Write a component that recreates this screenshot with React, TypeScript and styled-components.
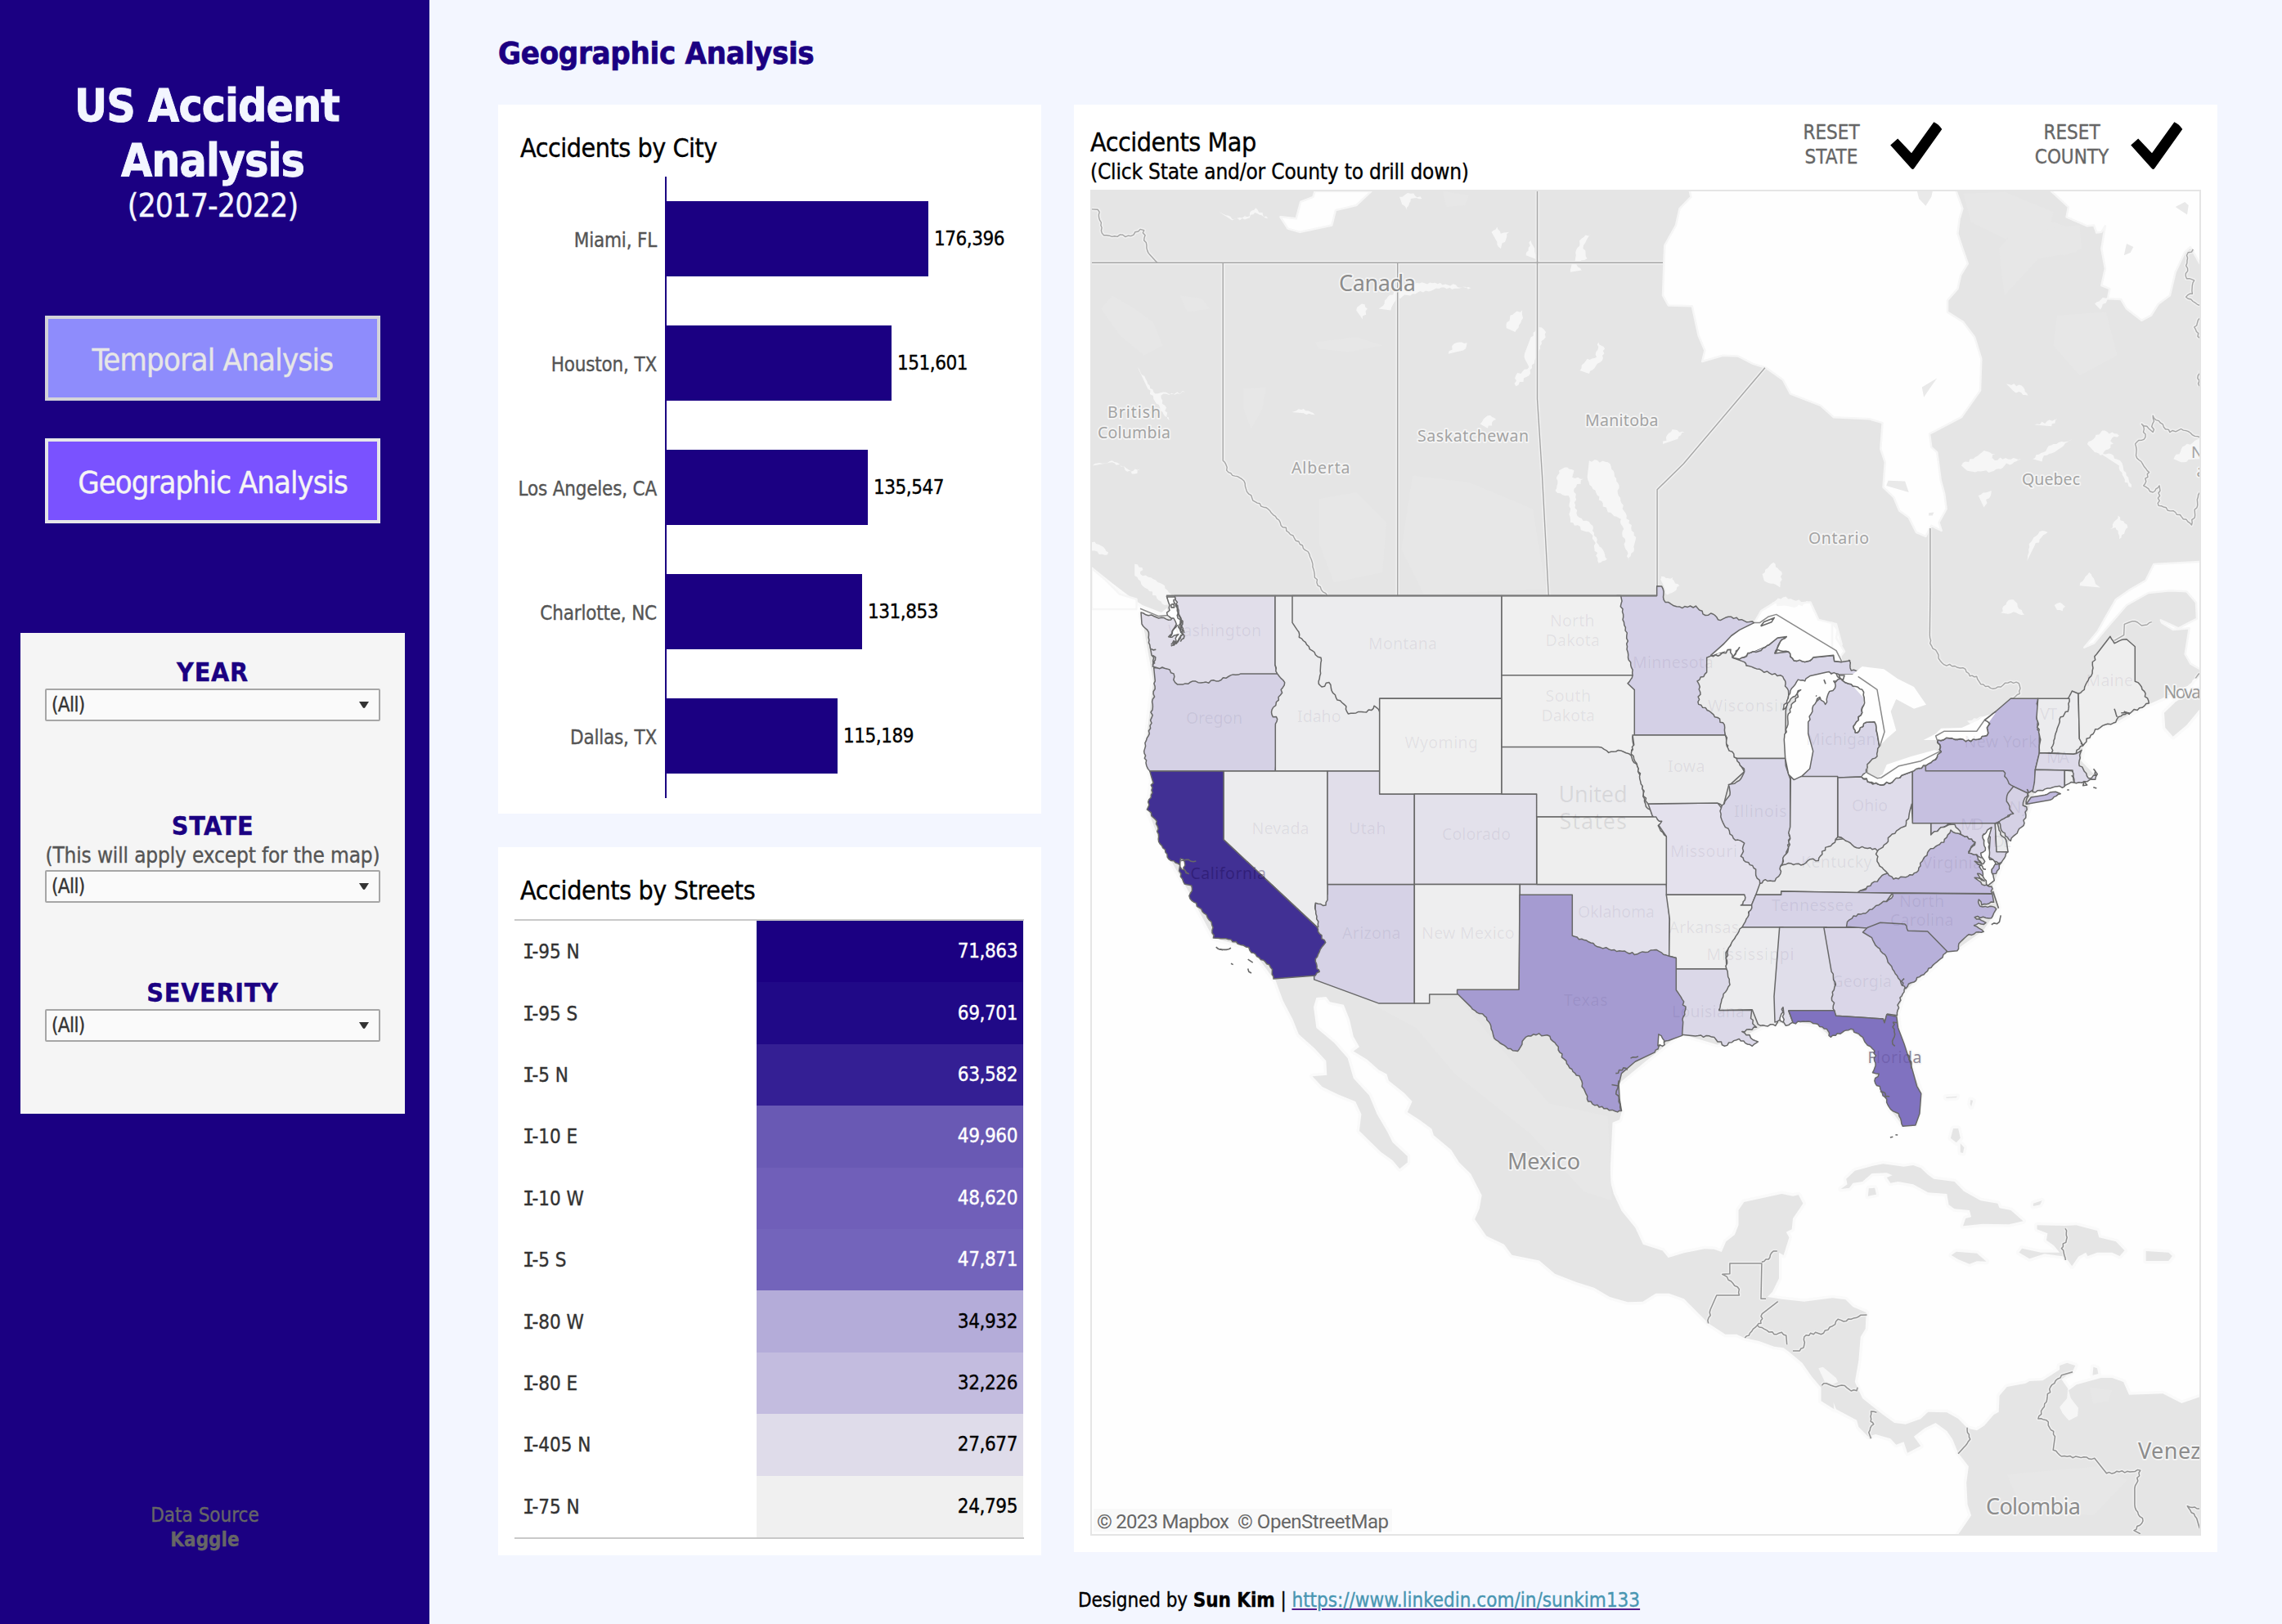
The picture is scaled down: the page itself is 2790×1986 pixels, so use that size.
import React from "react";
import styled, { createGlobalStyle } from "styled-components";

const NAVY = "#1b0082";

const GlobalStyle = createGlobalStyle`
  * { box-sizing: border-box; }
  body { margin: 0; background: #f3f6ff; }
`;

/* ---------- layout ---------- */

const Page = styled.div`
  display: flex;
  width: 2790px;
  height: 1986px;
  overflow: hidden;
  background: #f3f6ff;
  color: #000;
  font-family: "DejaVu Sans Condensed", "DejaVu Sans", Verdana, sans-serif;
  -webkit-text-stroke: 0.35px;
`;

const Sidebar = styled.aside`
  display: flex;
  flex-direction: column;
  width: 525px;
  height: 100%;
  padding: 96px 30px 0 25px;
  background: ${NAVY};
`;

const Brand = styled.header`
  height: 290px;
  color: #f3f6ff;
  text-align: center;
`;

const BrandLine = styled.div<{ $shift?: number }>`
  font-size: 55px;
  font-weight: 700;
  line-height: 67px;
  letter-spacing: -1px;
  white-space: nowrap;
  padding-right: ${(p) => p.$shift ?? 0}px;
  -webkit-text-stroke: 0.8px;
`;

const BrandYears = styled.div`
  font-size: 39px;
  line-height: 44px;
  letter-spacing: -0.9px;
`;

const Nav = styled.nav`
  display: flex;
  flex-direction: column;
  gap: 46px;
  padding: 0 30px;
`;

const NavButton = styled.button<{ $active?: boolean }>`
  height: 104px;
  padding: 3px 0 0;
  border: 4px solid ${(p) => (p.$active ? "#e6e6e9" : "#d3d3d9")};
  background: ${(p) => (p.$active ? "#7a52ff" : "#8e8cfc")};
  color: ${(p) => (p.$active ? "#f5f5f5" : "#e6e6e6")};
  font-family: inherit;
  font-size: 38px;
  letter-spacing: ${(p) => (p.$active ? -1 : -0.75)}px;
  white-space: nowrap;
  -webkit-text-stroke: 0.4px;
`;

const Filters = styled.section`
  height: 588px;
  margin-top: 134px;
  padding: 28px 30px 0;
  background: #f5f5f5;
`;

const Filter = styled.div<{ $gap?: number }>`
  display: flex;
  flex-direction: column;
  margin-bottom: ${(p) => p.$gap ?? 0}px;
`;

const FilterLabel = styled.div`
  font-size: 32px;
  font-weight: 700;
  line-height: 40px;
  letter-spacing: 0.7px;
  text-align: center;
  color: ${NAVY};
`;

const FilterNote = styled.div`
  margin-bottom: 2px;
  font-size: 26px;
  line-height: 32px;
  letter-spacing: -0.16px;
  text-align: center;
  white-space: nowrap;
  color: #555;
`;

const Select = styled.div`
  display: flex;
  align-items: center;
  justify-content: space-between;
  height: 40px;
  padding: 0 12px 0 6px;
  border: 2px solid #a6a6a6;
  border-radius: 2px;
  background: #fafafa;
  color: #333;
  font-size: 24px;
  letter-spacing: -0.6px;
`;

const Source = styled.footer`
  margin: auto 0 88px;
  padding-right: 19px;
  text-align: center;
  color: #666;
  font-size: 24px;
  line-height: 30px;
`;

const Main = styled.main`
  display: flex;
  flex-direction: column;
  width: 2265px;
  padding: 41px 0 0 84px;
`;

const Heading = styled.h1`
  margin: 0 0 39px;
  font-size: 38px;
  line-height: 48px;
  letter-spacing: -0.3px;
  color: ${NAVY};
  -webkit-text-stroke: 0.7px;
`;

const Board = styled.div`
  display: grid;
  grid-template-columns: 664px 1398px;
  column-gap: 40px;
  align-items: start;
`;

const Stack = styled.div`
  display: flex;
  flex-direction: column;
  gap: 41px;
`;

const Card = styled.section<{ $height: number }>`
  height: ${(p) => p.$height}px;
  background: #fff;
`;

const CardTitle = styled.h2<{ $spacing: number }>`
  margin: 0;
  padding: 33px 0 0 27px;
  font-size: 32px;
  font-weight: 400;
  line-height: 40px;
  letter-spacing: ${(p) => p.$spacing}px;
`;

/* ---------- city bars ---------- */

const CityChart = styled.div`
  display: grid;
  grid-template-rows: repeat(5, 152px);
  margin-top: 15px;
`;

const CityRow = styled.div`
  display: grid;
  grid-template-columns: 204px 1fr;
`;

const CityLabel = styled.div`
  padding: 4px 10px 0 0;
  font-size: 24px;
  line-height: 148px;
  letter-spacing: -0.2px;
  text-align: right;
  color: #555;
`;

const CityTrack = styled.div`
  display: flex;
  align-items: center;
  border-left: 2px solid ${NAVY};
`;

const Bar = styled.div`
  height: 92px;
  background: ${NAVY};
`;

const BarValue = styled.span`
  margin-left: 7px;
  font-size: 24px;
  letter-spacing: -0.45px;
`;

/* ---------- street table ---------- */

const StreetTable = styled.div`
  display: grid;
  grid-template-rows: repeat(10, 1fr);
  height: 758px;
  margin: 15px 21px 0 20px;
  border-top: 2px solid #c9c9c9;
  border-bottom: 2px solid #c9c9c9;
`;

const StreetRow = styled.div`
  display: grid;
  grid-template-columns: 296px 326px;
  font-size: 24px;
`;

const StreetName = styled.div`
  display: flex;
  align-items: center;
  padding: 1px 0 0 12px;
  white-space: pre;
  color: #333;
`;

/* Interstate "I" with slab serifs, so that it is not read as a lowercase L. */
const SlabI = styled.span`
  margin: 0 -3px 0 -2px;
  font-family: "DejaVu Sans Mono", monospace;
`;

const StreetValue = styled.div<{ $fill: string; $dark: boolean }>`
  display: flex;
  align-items: center;
  justify-content: flex-end;
  padding: 0 7px 1px 0;
  letter-spacing: -0.4px;
  background: ${(p) => p.$fill};
  color: ${(p) => (p.$dark ? "#fff" : "#000")};
`;

/* ---------- map card ---------- */

const MapHeader = styled.div`
  display: flex;
  height: 104px;
  padding: 0 36px 0 20px;
`;

const MapTitles = styled.div`
  flex: 1;
  padding-top: 28px;
  line-height: 36px;
  white-space: nowrap;
`;

const MapTitle = styled.div`
  font-size: 32px;
  letter-spacing: -0.5px;
`;

const MapHint = styled.div`
  font-size: 26px;
  letter-spacing: -0.18px;
`;

const Resets = styled.div`
  display: flex;
  gap: 102px;
`;

const Reset = styled.div`
  display: flex;
  gap: 16px;
`;

const ResetText = styled.div`
  width: 100px;
  padding-top: 19px;
  font-size: 24px;
  line-height: 30px;
  text-align: center;
  color: #666;
`;

const CheckIcon = styled.svg`
  width: 76px;
  height: 70px;
  margin-top: 15px;
  filter: blur(0.7px);
`;

const MapFrame = styled.div`
  width: 1358px;
  height: 1646px;
  margin-left: 20px;
  border: 2px solid #e5e5e5;
  background: #fefefe;
`;

const MapCanvas = styled.svg`
  display: block;
  width: 1354px;
  height: 1642px;
  overflow: hidden;
`;

const Credit = styled.footer`
  margin-top: 40px;
  padding-left: 709px;
  font-size: 24px;
  line-height: 30px;
  letter-spacing: -0.08px;
`;

const ProfileLink = styled.a`
  color: #4996b2;
  letter-spacing: 0;
  text-decoration: underline;
  text-decoration-color: #551a8b;
  text-decoration-thickness: 2px;
  text-underline-offset: 2px;
`;

/* ---------- data ---------- */

const cities: [string, number][] = [
  ["Miami, FL", 176396],
  ["Houston, TX", 151601],
  ["Los Angeles, CA", 135547],
  ["Charlotte, NC", 131853],
  ["Dallas, TX", 115189],
];

const streets: [string, number, string][] = [
  ["I-95 N", 71863, "#1b0082"],
  ["I-95 S", 69701, "#200987"],
  ["I-5 N", 63582, "#341f94"],
  ["I-10 E", 49960, "#6959b4"],
  ["I-10 W", 48620, "#705fb9"],
  ["I-5 S", 47871, "#7364bb"],
  ["I-80 W", 34932, "#b4acd9"],
  ["I-80 E", 32226, "#c3bcdf"],
  ["I-405 N", 27677, "#dfdcea"],
  ["I-75 N", 24795, "#f0f0f0"],
];

const format = (n: number) => n.toLocaleString("en-US");

/* ---------- map geometry ----------
   Outlines are kept on regional survey sheets, each with its own origin and scale.
   An outline is a string of points with sheet names between them; a "~" before
   a point makes the segment that leads to it irregular (rivers, coasts). */

type Sheet = [ox: number, oy: number, sx: number, sy: number];

const sheets: Record<string, Sheet> = {
  G: [0, 0, 1, 1],
  T: [0, 0, 0.56202, 0.56202],
  W: [1320, 690, 3, 2.8],
  C: [1790, 690, 3, 2.8],
  E: [2240, 690, 3, 3],
  S: [2180, 1040, 2.9037, 3],
  P: [1300, 100, 2.1778, 2.45],
  Q: [2010, 100, 2.1778, 2.45],
  M: [1320, 1180, 2.0907, 1.9454],
  K: [1990, 1380, 2.1778, 3],
};

const noise = (x: number, y: number) => {
  const v = Math.sin(x * 12.9898 + y * 78.233) * 43758.5453;
  return (v - Math.floor(v)) * 2 - 1;
};

function wiggle(x0: number, y0: number, x1: number, y1: number, amp: number): string {
  const dx = x1 - x0;
  const dy = y1 - y0;
  const len = Math.hypot(dx, dy) || 1;
  const steps = Math.max(1, Math.round(len / 3.2));
  let d = "";
  for (let i = 1; i < steps; i++) {
    const t = i / steps;
    const k = noise(Math.round(x0 + i * 7), Math.round(y1 + i * 3)) * amp;
    d += `L${(x0 + dx * t - (dy / len) * k).toFixed(1)} ${(y0 + dy * t + (dx / len) * k).toFixed(1)}`;
  }
  return `${d}L${x1.toFixed(1)} ${y1.toFixed(1)}`;
}

function trace(spec: string, close = false, amp = 1.5): string {
  let sheet = sheets.G;
  let px = 0;
  let py = 0;
  let d = "";
  for (const token of spec.trim().split(/\s+/)) {
    if (sheets[token]) {
      sheet = sheets[token];
      continue;
    }
    const rough = token[0] === "~";
    const [a, b] = token.replace("~", "").split(",").map(Number);
    const x = sheet[0] + a / sheet[2];
    const y = sheet[1] + b / sheet[3];
    if (!d) d = `M${x.toFixed(1)} ${y.toFixed(1)}`;
    else d += rough ? wiggle(px, py, x, y, amp) : `L${x.toFixed(1)} ${y.toFixed(1)}`;
    px = x;
    py = y;
  }
  return close ? `${d}Z` : d;
}

const mainland = `
  G 1325,224 2699,224
  E 1358,390 ~1310,440 ~1215,490 1165,512 1100,545 1050,575 960,605 920,670 912,720 960,770 900,795 750,820 730,870 710,930 650,1010 620,1100 585,1190
  S 745,130 765,210 710,295 620,360 575,375 540,420 460,490 430,520 405,600 415,680 455,790 490,890 470,1005 425,1010 380,950 330,840 325,740 270,680 230,655 170,685 120,640 40,630 5,640
  T 1224,703 1210,706 1195,714 1180,718 1160,712 1155,710 1130,730 1112,745 1112,762
  M 1385,350 1380,368 1362,375 1355,510 1365,545 1385,585 1420,625 1440,665 1490,680 1505,697
  K 107,475 150,457 205,442 230,443 250,453 262,415 285,390 295,355 295,300 310,270 410,240 440,248 455,244 467,275 440,330 437,370 422,380 430,400 415,465 403,455 403,550 385,600 372,618
    410,626 470,635 545,622 580,628 600,655 635,675 633,735 620,765 615,850 605,930 625,990 680,1050 710,1080 740,1085 780,1066 800,1040 850,1042 880,1065 905,1100 930,1108 950,1090 975,1050 988,1040 990,980 1010,948 1060,935 1070,927 1105,925 1150,885 1150,870 1170,860 1192,870 1185,890
    1155,920 1175,960 1195,940 1260,915 1290,915 1320,930 1335,977 1425,973 1475,1008 1533,980 1533,1500
    880,1490 915,1420 905,1380 902,1300 908,1240 880,1190 865,1140 850,1110 820,1080 790,1100 762,1130 780,1165 745,1190 735,1150 715,1160 700,1138 660,1122 640,1130 615,1095 610,1070 555,1030 548,1005 550,1030 515,1000 515,950 490,910 465,860 430,820
    415,805 390,800 350,780 310,768 290,755 260,755 215,715 150,625 110,605 75,605 40,635 0,637
  M 1375,795 1355,790 1315,768 1270,755 1215,735 1175,703 1105,690 1085,665 1040,645 1010,605 1022,580 1028,548 1000,497 970,470 950,440 905,405 900,390 868,368 838,350 850,325 830,305 790,275 785,260 765,250 735,225 700,205 715,195 700,170 690,130 675,95 640,88 630,76 605,78 598,100 605,150 650,185 685,222 700,270 740,310 760,355 785,395 800,422 838,455 838,470 818,485 800,465 770,445 715,395 720,355 705,325 660,308 620,290 595,265 632,262 630,228 600,198 560,165 545,130 520,85 500,35
  W 711,1420 645,1335 620,1312 490,1280 405,1130 290,940 250,840 265,740 255,700 240,640 270,400 230,190 225,170 330,182 320,150 300,165 230,140 190,115 120,65 40,5`;

const waters = [
  `Q 120,318 125,345 95,380 85,430 55,490 50,640 65,670 128,672 145,760 162,805 155,838 210,820 250,822 290,845 325,857 370,893 390,935 470,970 505,1005 600,1010 635,1022 630,1100 642,1140 637,1215 665,1245 680,1285 705,1305 725,1350 750,1362 765,1330 792,1345 785,1320 805,1280 800,1235 790,1195 780,1110 765,1095 760,1055 845,1005 895,925 898,830 880,765 850,720 808,690 808,655 835,620 843,580 862,545 845,490 835,455 840,410 848,380 828,318`,
  `Q 1075,318 1130,375 1125,405 1180,432 1198,430 1205,452 1218,450 1228,432 1218,500 1228,560 1218,610 1240,620 1235,650 1270,652 1285,680 1325,715 1350,700 1370,665 1400,640 1415,570 1440,510 1455,495 1480,545 1490,545 1490,318`,
  `E 1358,-10 1180,0 1150,60 1090,95 1040,130 1000,200 975,245 925,305 960,290 1010,230 1080,150 1160,105 1240,97 1300,100 1335,140 1338,200 1270,235 1205,205 1210,215 1250,240 1310,235 1295,330 1315,365 1358,390`,
  `C 1065,200 1090,160 1150,125 1150,140 1270,130 1300,190 1365,205 1385,275 1375,290 1385,335 1358,332 1355,312 1290,318 1250,335 1210,330 1190,300 1140,305 1183,248 1120,275 1050,303 1010,325 905,312 950,275 1010,225`,
  `E 0,215 20,240 15,270 45,320 20,350 0,310`,
];

const palerWaters = [
  `P 76,1380 100,1390 120,1410 110,1418 76,1405`,
  `P 190,1445 210,1455 205,1475 240,1490 270,1510 305,1568 270,1568 225,1520 190,1480`,
  `P 1400,1135 1450,1140 1480,1210 1478,1240 1500,1300 1525,1365 1520,1400 1505,1435 1497,1400 1485,1310 1450,1290 1410,1220 1395,1185`,
  `P 1335,1155 1360,1165 1355,1185 1385,1190 1360,1220 1368,1300 1410,1330 1420,1380 1448,1430 1425,1442 1410,1360 1350,1320 1345,1240 1310,1225 1320,1165`,
  `P 1245,765 1265,735 1285,750 1270,800 1255,835 1240,880 1205,912 1205,880 1240,855 1228,815`,
  `P 840,680 880,630 920,605 990,602 1085,618 1000,620 930,635 890,648 872,685`,
  `P 1180,738 1190,700 1222,685 1220,715 1203,750`,
  `P 1025,815 1040,785 1075,782 1065,805`,
  `P 780,685 795,665 810,680 797,712`,
  `P 1140,450 1155,435 1165,455 1187,450 1165,500 1155,480`,
  `P 1232,520 1245,475 1255,500 1268,535`,
  `P 1350,570 1365,520 1380,470 1404,455 1385,490 1395,530 1365,540 1380,565`,
  `P 1375,865 1395,830 1420,825 1425,780 1442,800 1435,835 1400,875`,
  `P 1110,1025 1130,1000 1152,1012 1130,1038`,
  `P 608,990 640,980 670,998 640,993`,
  `P 415,390 450,412 490,405 512,378 545,410 510,392 490,410 450,415`,
  `P 895,345 925,335 955,350 925,350 915,385 900,360`,
  `P 198,855 225,905 245,935 325,930 260,940 282,1015 240,950 225,920`,
  `P 78,1150 130,1135 180,1168 205,1160 190,1175 130,1140`,
  `Q 50,1085 75,1042 108,1050 90,1070`,
  `Q 45,1482 75,1490 95,1510 60,1535`,
  `Q 315,1475 345,1440 368,1475 362,1515 320,1495`,
  `Q 340,1560 370,1545 440,1560 400,1575`,
  `Q 845,1150 905,1105 935,1115 920,1130 1005,1130 960,1150 925,1168 860,1165`,
  `Q 1180,1085 1220,1045 1265,1060 1235,1075 1250,1085 1215,1120 1200,1110`,
  `Q 1040,1028 1100,1010 1085,1032`,
  `Q 965,905 1005,910 1022,940 985,928`,
  `Q 1035,1130 1090,1085 1140,1070 1105,1100 1065,1120 1060,1138`,
  `Q 1020,1435 1025,1385 1060,1345 1075,1350 1040,1390`,
  `Q 890,1240 925,1225 905,1275`,
  `Q 1160,1510 1185,1470 1200,1495 1215,1515`,
  `Q 1410,1130 1440,1090 1480,1070 1478,1130 1430,1140`,
  `Q 1210,1110 1250,1120 1275,1150 1298,1215 1280,1200 1265,1150`,
  `Q 1200,665 1240,640 1215,682`,
  `Q 1242,1340 1262,1300 1288,1335 1265,1370 1262,1345 1255,1335`,
  `E 815,150 835,140 855,155 845,172 825,168`,
  `E 618,178 640,140 665,130 680,155 705,185 665,175 645,182`,
  `E 495,575 520,565 552,558 530,580 515,595`,
  `C 720,50 765,45 755,65 790,75 745,105 735,80`,
];

const whiteLakes = [
  `P 76,1458 110,1490 150,1535 195,1550 195,1580 76,1580`,
  `P 578,405 620,410 632,360 665,345 670,328 820,328 780,370 725,385 715,430 630,450 598,440`,
];

const farIslands = [
  `E 1218,545 1260,505 1300,480 1358,455 1358,520 1300,590 1250,632 1222,600`,
  `K 568,222 585,205 582,185 605,155 650,138 680,130 720,137 735,140 760,135 780,145 800,170 815,185 870,195 895,230 940,265 985,275 990,292 1020,300 1053,340 1015,352 945,350 893,358 900,330 915,325 910,300 870,295 855,280 850,240 800,235 760,205 720,195 700,200 690,180 705,172 690,163 650,165 625,195 600,200 590,218`,
  `K 1090,355 1165,357 1195,355 1250,375 1255,400 1300,415 1323,448 1310,468 1290,455 1250,455 1225,468 1220,455 1200,470 1183,505 1165,470 1110,460 1070,478 1042,455 1050,440 1100,455 1150,455 1135,430 1115,410 1118,385 1090,370`,
  `K 862,465 875,452 930,458 955,488 930,487 910,497 880,480`,
  `K 1380,450 1440,455 1450,468 1440,486 1380,486`,
  `K 642,220 658,218 662,242 640,248`,
  `K 867,0 880,0 886,35 875,52 860,35`,
  `K 886,55 896,70 893,90 886,88`,
  `K 1080,275 1103,265 1098,280 1080,285`,
  `S 578,905 618,902 615,907 580,909`,
  `S 666,915 674,918 668,940 664,930`,
  `K 1240,875 1250,880 1253,900 1238,905`,
];

const bayIslands = [
  `Q 650,1195 695,1197 705,1230 645,1210`,
  `Q 740,915 780,888 760,920 745,945`,
  `Q 725,318 770,318 765,345 750,372 732,350`,
  `Q 1285,485 1303,495 1295,512 1278,520`,
  `Q 1415,375 1440,360 1450,370 1446,398`,
  `Q 758,1292 772,1290 768,1300 758,1300`,
];

const inlandWaters = [
  `K 508,880 520,875 555,915 560,930 545,940 525,930`,
  `K 1172,950 1180,990 1200,1025 1198,1055 1175,1072 1158,1045 1150,1022 1170,990`,
];

const relief = [
  `P 130,640 190,680 240,720 265,790 215,820 150,760 100,680`,
  `P 310,640 370,650 390,680 330,690`,
  `P 480,920 540,915 530,980 500,1040 480,980`,
  `P 680,1250 780,1230 860,1320 850,1470 720,1500 680,1380`,
  `P 930,1180 1080,1200 1250,1280 1285,1520 960,1535 900,1400`,
  `P 670,780 780,765 850,790 760,810 680,800`,
  `P 1010,328 1080,340 1070,370 1020,375`,
  `Q 945,500 1000,430 1090,420 1160,450 1150,510 1050,530 960,640`,
  `Q 1080,440 1160,430 1165,500 1120,520 1080,510`,
  `Q 1100,700 1230,690 1260,820 1160,880 1090,790`,
  `Q 850,335 960,330 1090,390 1080,440 960,470 870,420`,
  `M 740,90 970,80 1050,170 1200,330 1350,360 1360,560 1290,540 1150,400 960,260 860,150`,
  `K 1010,1270 1250,1240 1330,1290 1240,1420 1050,1400`,
  `K 1230,950 1290,960 1280,1000 1240,1010`,
];

const provinceLines = [
  `P 76,542 1300,542 Q 50,542`,
  `P 425,542 425,1135 ~440,1170 ~475,1190 ~505,1255 ~545,1280 ~600,1350 ~655,1415 ~675,1500 ~703,1540`,
  `P 890,542 890,1540`,
  `P 1262,328 1262,950 1275,1180 1292,1540`,
  `P 76,382 92,383 ~100,430 ~108,460 ~180,462 ~205,442 ~215,445 ~215,475 ~232,520 250,542`,
  `Q 322,857 105,1145 35,1222 35,1515`,
  `Q 762,1338 762,1500 E 360,100 358,260 ~365,300 ~410,368 ~480,380 ~505,410 ~530,412 ~545,440 ~600,455 ~645,435 ~685,437 ~688,475 ~655,493`,
  `E 1035,280 1070,260 1072,220 1090,213 ~1120,213 ~1135,225 ~1172,212`,
  `Q 1462,502 ~1445,520 ~1445,590 ~1465,595 ~1460,635 ~1443,645 ~1480,670`,
  `Q 1480,708 ~1465,735 ~1480,768`,
  `Q 1480,1065 ~1430,1040 ~1400,1050 ~1355,1000 ~1355,1050 ~1325,1025 ~1335,1065 ~1308,1085 ~1310,1120 ~1345,1170 ~1330,1210 ~1355,1230 ~1372,1210 ~1370,1270 ~1415,1290 ~1458,1328 ~1480,1230`,
  `Q 1480,865 ~1475,880 ~1479,912`,
  `E 1333,418 1345,402 1350,402`,
];

const countryLines = [
  `K 215,715 ~220,665 237,612 297,612 ~297,590 ~275,560 ~252,535 272,533 272,495 357,495 355,625 368,625`,
  `K 357,490 ~375,480 ~388,450 398,450`,
  `K 400,635 358,680 ~355,715 ~345,722 ~330,745 ~312,768`,
  `K 345,722 ~390,755 ~410,748 ~422,760 424,793`,
  `K 440,816 458,816 ~470,795 ~470,765 ~500,748 ~515,755 ~545,725 ~560,700 ~575,708 ~620,685 637,684`,
  `K 517,943 ~522,935 ~555,948 ~570,942 ~595,963 ~610,962 612,950`,
  `K 663,1042 ~648,1038 ~647,1075 ~655,1085 ~642,1115 648,1138`,
  `K 904,1097 ~912,1140 ~895,1170 880,1193`,
  `K 1185,893 1155,905 ~1130,940 ~1110,1010 ~1093,1065 ~1115,1070 ~1138,1130 1133,1180 ~1155,1203 ~1200,1205 ~1243,1210 1275,1265 ~1330,1258 ~1365,1255 ~1350,1320 1350,1380 ~1372,1440 ~1348,1475 1365,1487`,
  `K 1523,1395 ~1490,1385 ~1515,1430 1523,1468`,
  `K 1165,367 ~1170,400 ~1155,440 ~1166,483`,
];

/* Painted in order: a later outline hides the rough overlap of the earlier ones. */
const states: [string, string, string][] = [
  ["OR", "#d5d1e5", `W 272,355 591,350 725,370 760,400 730,560 718,708 257,708 ~243,680 ~236,640 ~247,595 ~256,580 ~268,480 ~277,400`],
  ["WA", "#e1deea", `W 348,108 717,108 717,345 725,375 591,375 ~545,385 ~500,400 ~455,405 ~415,400 ~378,412 ~350,405 ~345,375 ~320,358 ~285,355 268,350 ~272,320 ~262,300 ~255,260 ~248,225 ~228,205 225,165 ~290,185 ~335,190 ~350,170 ~355,140`],
  ["ID", "#ececee", `W 717,108 900,108 1100,440 1100,708 718,708 718,555 ~725,530 ~705,515 ~710,490 ~730,465 ~752,405 ~725,375 ~717,345`],
  ["MT", "#ececee", `W 780,108 C 138,108 138,460 W 1100,460 1100,505 ~1080,485 ~1070,500 ~985,512 ~970,480 ~945,465 ~915,405 ~888,420 ~877,410 ~885,320 ~865,310 ~805,250 ~798,225 780,200`],
  ["AZ", "#d6d2e6", `W 909,1096 1228,1096 1228,1504 1098,1504 860,1422 860,1250 865,1160 909,1130`],
  ["NV", "#ececee", `W 528,708 909,708 909,1150 ~903,1168 ~865,1160 ~875,1242 870,1242 528,943`],
  ["CA", "#413094", `W 257,708 528,708 528,943 870,1242 ~880,1265 ~902,1295 ~882,1320 ~865,1360 ~870,1385 ~880,1395 ~865,1408 711,1420 ~700,1380 ~645,1335 ~630,1330 ~620,1312 ~580,1300 ~555,1285 ~490,1280 ~485,1235 ~465,1200 ~405,1145 ~410,1100 ~385,1095 ~370,1070 ~368,1030 ~335,1015 ~290,950 ~283,880 ~247,840 ~262,790 ~267,740`],
  ["UT", "#e1deea", `W 909,708 1100,708 1100,787 1228,787 1228,1096 909,1096`],
  ["WY", "#f0f0f0", `W 1100,460 C 138,460 138,787 W 1100,787`],
  ["CO", "#e3e1eb", `W 1228,787 C 266,787 266,1096 W 1228,1096`],
  ["NM", "#eeeeef", `W 1228,1096 C 205,1096 202,1458 W 1385,1458 1385,1473 1283,1473 1283,1504 1228,1504`],
  ["MN", "#d4d0e6", `C 560,108 707,108 707,75 725,76 ~738,130 ~760,137 ~800,150 ~850,143 ~885,175 ~905,168 ~940,192 ~980,180 ~1065,202 950,275 905,330 900,480 960,550 958,585 625,585 600,400`],
  ["ND", "#f0f0f0", `C 138,108 575,108 ~582,190 ~598,235 ~602,310 ~618,380 138,380`],
  ["NE", "#ececee", `C 138,600 613,600 613,655 ~640,700 ~655,760 ~665,820 ~695,865 266,865 266,787 138,787`],
  ["SD", "#f0f0f0", `C 138,380 618,380 ~600,408 625,430 625,585 ~618,600 ~622,620 ~613,655 ~575,638 ~530,645 ~493,626 138,626`],
  ["OK", "#e3e1ec", `C 205,1096 742,1096 754,1215 752,1345 700,1400 300,1400 205,1300`],
  ["MO", "#e4e1ed", `C 675,820 930,818 1000,900 1100,1080 ~1085,1130 1070,1132 1055,1168 1015,1168 1028,1132 742,1132 742,932 715,895 690,860`],
  ["KS", "#eeeeee", `C 267,865 695,865 ~725,880 ~712,895 ~742,932 742,1096 267,1096`],
  ["UP", "#d9d6e8", `C 1005,325 1050,303 1120,275 1150,252 ~1183,248 ~1160,265 ~1140,305 1190,300 ~1210,330 ~1250,335 ~1290,318 1355,312 1358,332 1385,335 1415,330 E 62,352 ~70,390 ~105,395 ~100,410 ~75,404 25,405 C 1370,375 1330,372 1190,450 1160,395 1030,345`],
  ["MI", "#d9d6e8", `C 1200,727 1220,560 1280,480 1330,440 1375,390 E 40,428 ~70,440 ~110,460 ~118,500 ~110,545 ~78,595 ~85,618 ~100,610 ~125,580 155,578 ~165,620 173,668 ~165,705 ~128,735 ~125,765 ~108,780 21,783 C 1370,730`],
  ["WI", "#ebebec", `C 890,320 905,314 ~975,293 ~985,320 1028,335 ~1035,347 ~1120,373 ~1160,380 ~1178,400 ~1190,450 1180,500 1178,665 1000,665 ~965,630 ~955,550 ~915,515 ~860,480 ~865,420 ~855,400 ~890,370`],
  ["IA", "#ececed", `C 618,585 958,585 ~968,630 ~1000,665 1028,710 970,760 950,830 ~930,818 675,820 ~665,810 ~655,760 ~640,700 ~613,650 ~622,610`],
  ["KY", "#eaeaec", `C 1085,1093 1100,1060 1300,950 1440,935 E 21,1000 200,1040 180,1060 203,1133 150,1180 105,1197 S 265,155 0,150 C 1163,1120 1163,1132 1070,1132`],
  ["IL", "#d9d6e8", `C 1000,665 1178,665 1180,690 1196,735 1196,920 ~1190,970 ~1160,1035 ~1160,1060 ~1140,1085 ~1105,1080 ~1085,1093 ~1070,1065 ~1070,1045 ~1015,1000 ~1028,955 ~995,945 ~945,875 ~943,835 ~975,790 ~970,755 ~1010,740 ~1028,710 ~1000,665`],
  ["IN", "#e5e3ed", `C 1198,727 1370,727 1370,935 ~1345,965 ~1325,970 ~1300,1015 ~1270,1010 ~1235,1030 ~1200,1025 ~1162,1032 ~1195,960 ~1190,920 1196,900`],
  ["OH", "#dfdcea", `E 21,783 108,780 ~170,808 ~220,800 ~255,775 295,760 295,950 200,1060 165,1050 ~140,1040 ~90,1040 ~50,1015 ~21,1000`],
  ["VA", "#c3bcdf", `S 265,155 743,158 ~740,132 ~715,128 ~680,100 ~715,112 ~690,85 ~722,97 ~720,70 ~680,40 ~705,48 E ~520,1060 ~500,1055 ~525,1020 ~470,990 435,970 350,1040 200,1135 S ~340,105 ~310,130 ~265,155`],
  ["TN", "#d7d3e7", `C 1070,1132 1163,1132 1163,1120 S 388,157 300,283 0,283 C 1020,1243 ~1035,1210 ~1055,1165`],
  ["AR", "#eeeeee", `C 742,1132 1028,1132 ~1030,1150 ~1015,1168 1055,1168 ~1035,1215 ~1020,1243 960,1330 963,1386 778,1386 778,1348 752,1342 754,1215`],
  ["LA", "#dbd8e8", `C 778,1386 975,1386 980,1440 940,1520 935,1527 1055,1527 T 1203,700 ~1207,706 ~1197,709 ~1208,716 ~1204,719 ~1195,714 ~1185,719 ~1178,713 ~1165,712 1154,711 1150,690`],
  ["TX", "#a59bd1", `C 204,1132 397,1132 397,1272 ~440,1287 ~480,1305 ~530,1318 ~580,1325 ~635,1335 ~705,1320 ~752,1342 778,1348 778,1458 ~800,1490 ~812,1525 ~803,1568 M 1540,168 1505,180 ~1485,190 ~1470,208 1420,230 1385,258 1378,285 1380,320 1385,347 ~1375,350 ~1340,342 ~1300,325 ~1280,270 ~1245,235 ~1215,185 ~1195,167 ~1160,165 ~1140,172 ~1120,205 ~1090,195 ~1060,175 ~1040,125 ~1000,100 965,68 965,59 1123,59`],
  ["MS", "#ececee", `C 1020,1243 1170,1243 1160,1300 1147,1480 1150,1568 T 1220,705 ~1208,704 1204,694 C 935,1527 ~945,1490 ~975,1440 ~962,1385 ~965,1330 ~985,1290 ~1020,1243`],
  ["AL", "#e0deea", `C 1157,1243 1330,1243 1357,1390 1367,1530 1190,1530 S 20,590 35,630 ~10,643 -4,620 C ~1140,1568 1137,1480`],
  ["GA", "#dad6e8", `S 145,283 300,283 400,400 450,470 430,510 ~415,540 ~405,605 370,600 360,630 355,618 188,607 ~178,570 ~175,520 ~187,492 ~172,445`],
  ["FL", "#8072c0", `S 20,587 182,587 188,607 355,618 360,632 368,602 403,610 408,650 430,710 455,790 475,865 490,892 485,965 470,1008 425,1012 ~410,965 ~382,950 ~362,905 ~345,875 ~325,845 ~340,820 ~318,815 ~328,780 ~325,735 ~300,715 ~275,680 ~240,655 ~210,668 ~170,685 ~155,655 ~115,635 ~80,628 ~35,632`],
  ["NC", "#bdb6dc", `S 225,280 300,285 400,350 580,372 618,368 ~630,335 ~660,308 ~712,298 ~678,275 ~720,265 ~680,245 ~740,248 ~757,215 ~735,205 ~700,205 ~695,180 ~705,200 ~748,190 743,160 388,157 ~385,175 ~340,200 ~300,225 ~250,240 ~228,262`],
  ["SC", "#b7b0da", `S 283,300 300,283 345,265 432,270 ~443,295 513,297 582,370 ~545,410 ~500,455 ~455,485 ~435,507 ~422,495 ~405,460 ~370,400 ~335,355 ~315,320`],
  ["NY", "#c0b9de", `E 655,493 755,493 ~750,560 ~760,625 760,695 745,755 742,825 718,840 630,840 343,780 343,738 ~385,708 ~400,688 ~388,645 ~430,638 ~480,642 ~490,650 ~545,640 ~572,620 ~568,600 ~578,585 ~560,572 600,540`],
  ["PA", "#c6c0e0", `E 295,760 343,738 343,758 628,758 ~645,795 ~665,815 700,850 665,915 ~620,942 598,950 295,950`],
  ["NJ", "#d5d1e5", `E 665,815 718,840 ~700,885 713,890 ~705,950 ~655,1015 ~620,975 ~612,945 ~665,915 ~640,870 ~645,840`],
  ["LI", "#c0b9de", `E 712,880 730,855 780,847 ~820,835 838,842 ~800,865 715,880`],
  ["MD", "#d9d5e7", `E 362,950 598,950 603,1053 645,1055 ~620,1095 ~595,1090 ~575,1075 580,1000 ~555,990 ~565,1040 ~560,1085 ~530,1065 ~500,1060 ~525,1020 ~470,990 ~435,955 ~400,965 ~362,993`],
  ["ES", "#c3bcdf", `E 595,1100 ~620,1095 ~605,1125 ~585,1145 ~585,1120`],
  ["WV", "#ebebec", `E 292,880 295,950 362,950 362,993 ~400,965 ~450,955 ~472,990 ~435,975 ~410,1020 ~355,1050 ~330,1090 ~310,1130 ~270,1148 ~225,1155 ~203,1133 ~165,1090 ~165,1055 ~190,1030 ~220,990 ~270,960 ~285,905`],
  ["DE", "#eaeaec", `E 598,950 ~612,945 ~612,975 ~640,1020 645,1055 603,1055`],
  ["NH", "#ececee", `E 865,493 ~880,465 903,475 907,640 ~920,665 ~885,697 805,692 790,600`],
  ["VT", "#ececee", `E 755,493 870,493 ~865,540 ~838,560 ~820,620 ~805,692 760,692 ~760,625 ~750,560`],
  ["MA", "#dddae9", `E 760,692 885,697 ~915,682 ~905,730 ~925,760 ~940,785 ~970,775 ~960,752 ~973,770 ~965,790 ~925,797 ~885,800 882,756 745,754`],
  ["CT", "#dddae9", `E 745,754 853,756 853,815 ~790,822 ~735,835 742,800`],
  ["RI", "#ececee", `E 853,756 880,758 ~887,800 ~853,812`],
  ["ME", "#eeeeee", `E 903,475 ~925,460 ~950,410 ~955,370 ~970,330 1020,265 ~1035,290 ~1080,275 1111,302 1111,430 ~1135,450 ~1162,510 ~1100,540 ~1050,560 ~1040,580 ~965,605 ~920,665 907,640`],
];

const greatLakes = [
  `C 1078,195 1090,195 1145,172 1365,296 1385,333 1358,332 1355,312 1290,318 1250,335 1210,330 1190,300 1150,293 1140,305 1160,265 1183,248 1150,252 1120,275 1050,303 1010,325 985,320 975,293 905,312 950,275 980,245 1010,225`,
  `E 25,405 75,404 110,375 190,385 240,420 300,450 345,515 300,530 235,495 215,540 235,610 200,640 173,668 165,620 155,578 125,580 100,610 85,618 78,595 112,545 115,490 70,440 30,425`,
  `E 108,780 128,762 165,783 185,770 200,735 290,705 375,682 400,688 385,708 345,738 300,760 255,775 220,800 170,808 140,800`,
  `E 335,645 380,622 400,602 475,600 530,575 550,560 600,545 575,580 568,600 572,620 545,640 490,650 480,642 430,638 388,645`,
];

const shoreLines = [
  `C 1065,200 1010,225 980,245 950,275 905,312 ~940,310 ~978,292 ~985,320 ~1010,285 985,320 1010,325 ~1050,303 ~1090,295 ~1120,275 1150,252 1183,248 ~1160,265 1140,305 ~1150,293 ~1190,300 ~1210,330 ~1250,335 ~1290,318 1355,312 1358,332 1385,335`,
  `C 1088,212 1100,197 1138,183 1128,198 1088,212`,
  `E 25,405 ~40,428 ~70,440 ~110,460 ~118,500 ~110,545 ~78,595 ~85,618 ~100,610 ~125,580 155,578 ~165,620 173,668`,
  `E 108,780 ~140,800 ~170,808 ~220,800 ~255,775 300,758 ~345,738 ~385,708 ~400,688 ~388,645 ~430,638 ~480,642 ~490,650 ~545,640 ~572,620 ~568,600 ~578,585 ~560,572 600,540`,
  `E 25,408 45,408 40,425 28,418`,
];

const lakeBorders = [
  `C 1065,200 1085,200 1115,180 1145,172 1365,296 1385,333`,
  `E 95,412 165,460 192,615 175,668`,
  `E 128,735 128,765 165,785 180,783 245,740 325,722 398,685`,
  `E 385,645 380,630 410,613 530,613 560,570 600,540`,
  `W 222,152 290,178 325,175 335,150 318,108`,
];

const lakeMichigan = `C 1330,370 ~1365,375 ~1380,392 ~1355,400 ~1360,425 ~1335,445 ~1325,480 ~1305,455 ~1280,485 ~1262,540 1262,580 1280,640 1268,700 1240,725 1210,738 1190,720 1178,665 1174,600 ~1187,530 ~1200,490 ~1235,430 ~1205,455 ~1170,498 ~1190,450 ~1225,395 ~1250,400 ~1270,382`;

const inlets = [
  `E 585,965 ~565,985 ~552,995 ~562,1050 ~545,1060 ~560,1090 ~540,1110 ~570,1180 595,1160 ~585,1120 ~600,1098 ~575,1075 ~575,1000`,
  `W 370,1008 ~385,1020 ~380,1040 ~400,1060 ~375,1045 ~368,1025`,
  `W 350,112 ~358,150 ~372,185 ~378,240 ~345,278 ~362,240 ~330,250 ~355,205 ~345,185 ~322,175 ~330,140 ~320,112`,
  `S 0,575 ~-6,600 ~-10,625 0,630 ~3,600`,
  `M 1480,165 ~1490,175 ~1495,190 ~1478,192`,
];

const creeks = [
  `S 390,630 ~395,665 ~388,700 ~397,718`,
  `S 405,632 390,630`,
  `S 440,750 ~455,775 ~455,800`,
  `S 740,272 ~768,262 773,238`,
  `S 745,150 765,212`,
  `S 690,50 ~720,70`,
  `S 425,495 ~420,480 ~430,470`,
  `S 345,885 ~362,890 ~362,905 ~378,903`,
  `W 372,1015 ~400,1012 ~427,1016`,
  `W 345,120 ~360,150 ~358,175 ~375,200 ~362,215 ~380,240 ~350,270 ~335,280`,
  `W 360,165 ~372,190 ~368,205 ~383,235`,
  `W 365,175 ~378,195 ~370,225 ~384,245 ~370,265`,
  `W 335,275 ~345,262 ~355,272 ~365,258`,
  `W 325,250 ~345,222 ~360,208`,
  `W 335,138 345,136 347,148 336,148 335,138`,
  `W 262,290 ~280,292`,
  `W 268,312 ~278,318 ~268,345`,
  `W 268,330 ~276,340`,
  `W 500,1311 ~520,1319 ~555,1314`,
  `W 512,1318 525,1321`,
  `W 555,1367 563,1371`,
  `W 617,1353 635,1364`,
  `W 617,1385 ~630,1400`,
  `E 715,825 ~720,850 ~712,880`,
  `E 878,775 ~888,800`,
  `E 925,795 ~935,810 920,812 925,795`,
  `E 958,818 970,822`,
  `E 862,828 869,828`,
  `E 1035,530 ~1045,560`,
  `E 1060,545 ~1090,550 1070,540`,
  `E 135,800 ~152,803`,
  `M 1378,275 ~1372,300 ~1383,345`,
  `M 1360,285 1378,288`,
  `M 1370,258 ~1390,245 ~1400,250`,
  `M 1408,222 ~1428,218`,
  `S 380,1053 390,1051`,
  `S 399,1043 407,1044`,
  `C 1320,395 1326,410`,
  `C 1290,450 1294,452`,
];

/* ---------- map labels ---------- */

type Label = [text: string, x0: number, x1: number, baseline: number];

const countryLabels: Label[] = [
  ["Canada", 1638, 1730, 356],
  ["Mexico", 1844, 1931, 1430],
  ["Colombia", 2429, 2543, 1851.7],
  ["Venez", 2615, 2690, 1784],
];

const provinceLabels: Label[] = [
  ["British", 1355, 1418, 511],
  ["Columbia", 1343, 1430, 535.5],
  ["Alberta", 1580, 1649.5, 579],
  ["Saskatchewan", 1734, 1868, 540],
  ["Manitoba", 1939, 2026.5, 521],
  ["Ontario", 2212, 2284, 665],
  ["Quebec", 2473, 2542, 593],
];

const stateLabels: Label[] = [
  ["Washington", 1429, 1541, 778],
  ["Oregon", 1451, 1518, 885],
  ["Idaho", 1587, 1638.5, 883],
  ["Montana", 1674, 1756, 793.6],
  ["Wyoming", 1718.5, 1806, 914.6],
  ["Nevada", 1531.5, 1599.5, 1020.4],
  ["Utah", 1650, 1693.5, 1020.4],
  ["Colorado", 1764, 1846, 1027],
  ["Arizona", 1642, 1711.5, 1148],
  ["New Mexico", 1739, 1850.5, 1148],
  ["North", 1896, 1948.5, 765.7],
  ["Dakota", 1890.5, 1955, 790],
  ["South", 1890.5, 1944, 858],
  ["Dakota", 1885.5, 1949, 882],
  ["Minnesota", 1997, 2094, 817],
  ["Wisconsin", 2089, 2186, 870],
  ["Michigan", 2209, 2292.5, 911],
  ["Iowa", 2040, 2083.5, 943.6],
  ["Illinois", 2121, 2183.5, 999],
  ["Missouri", 2043, 2123, 1048],
  ["Kentucky", 2203, 2287.5, 1060.7],
  ["Oklahoma", 1930, 2022, 1122],
  ["Tennessee", 2167, 2265, 1114],
  ["Arkansas", 2041.5, 2125, 1140.7],
  ["Mississippi", 2087.5, 2192.5, 1174],
  ["Texas", 1913, 1964.5, 1229.6],
  ["Louisiana", 2045, 2132, 1243.6],
  ["Georgia", 2240.5, 2312, 1206.7],
  ["Ohio", 2265, 2307, 992],
  ["New York", 2402.5, 2489.5, 914],
  ["VT", 2495, 2514, 880],
  ["MA", 2503, 2529, 932.7],
  ["Maine", 2551.5, 2607, 839],
  ["NJ", 2457.5, 2477.5, 994],
  ["MD", 2398, 2424.5, 1015],
  ["DE", 2437.5, 2458.5, 1035.7],
  ["Virginia", 2351.5, 2422, 1061.7],
  ["North", 2323, 2376, 1109],
  ["Carolina", 2312, 2387.5, 1132],
];

const MapText = styled.text<{ $size: number; $fill: string; $halo?: boolean }>`
  font-family: "Noto Sans", "Open Sans", sans-serif;
  font-size: ${(p) => p.$size}px;
  fill: ${(p) => p.$fill};
  stroke: ${(p) => (p.$halo ? "rgba(247, 247, 247, 0.9)" : "none")};
  stroke-width: 3.5px;
  stroke-linejoin: round;
  paint-order: stroke;
`;

function Labels({ items, size, fill, halo }: { items: Label[]; size: number; fill: string; halo?: boolean }) {
  return (
    <>
      {items.map(([text, x0, x1, y]) => (
        <MapText key={text + x0 + y} x={x0 - 1} y={y} textLength={x1 - x0 + 2} $size={size} $fill={fill} $halo={halo}>
          {text}
        </MapText>
      ))}
    </>
  );
}

const Attribution = styled.text`
  font-family: Roboto, "Open Sans", sans-serif;
  font-size: 24px;
  fill: #666;
  -webkit-text-stroke: 0;
`;

const Areas = ({ items }: { items: string[] }) => (
  <>
    {items.map((s) => (
      <path key={s} d={trace(s, true)} />
    ))}
  </>
);

const Lines = ({ items }: { items: string[] }) => (
  <>
    {items.map((s) => (
      <path key={s} d={trace(s)} />
    ))}
  </>
);

function AccidentsMap() {
  return (
    <MapCanvas viewBox="1335 234 1354 1642" strokeLinejoin="round">
      <g stroke="#fafafa" strokeWidth={7} fill="#e5e5e5">
        <path d={trace(mainland, true)} />
        <Areas items={farIslands} />
      </g>
      <g fill="#e5e5e5">
        <path d={trace(mainland, true)} />
        <Areas items={farIslands} />
      </g>
      <g fill="#e7e7e7">
        <Areas items={relief} />
      </g>
      <g fill="#fefefe" stroke="#f6f6f6" strokeWidth={2.5}>
        <Areas items={waters} />
        <Areas items={whiteLakes} />
      </g>
      <g fill="#e9e9e9">
        <Areas items={bayIslands} />
      </g>
      <g fill="#f6f6f6">
        {palerWaters.map((s) => (
          <path key={s} d={trace(s.replace(/ (\d)/g, " ~$1"), true, 1.8)} />
        ))}
        <Areas items={inlandWaters} />
      </g>
      <g fill="none">
        <g stroke="#f0f0f0" strokeWidth={4.5}>
          <Lines items={provinceLines} />
          <Lines items={countryLines} />
        </g>
        <g stroke="#a6a6a6" strokeWidth={1.4}>
          <Lines items={provinceLines} />
        </g>
        <g stroke="#929292" strokeWidth={1.5}>
          <Lines items={countryLines} />
        </g>
      </g>
      <Labels items={countryLabels} size={27} fill="#8c8c8c" halo />
      <Labels items={provinceLabels} size={19.5} fill="#a3a3a3" halo />
      <Labels items={[["Nova", 2646.5, 2690, 854]]} size={21} fill="#999" halo />
      <Labels items={[["N", 2680, 2694, 559.6], ["a", 2686.5, 2696, 583]]} size={19.5} fill="#a3a3a3" halo />
      <Labels items={[["Florida", 2284.5, 2348.5, 1300]]} size={19.5} fill="#a3a3a3" halo />

      <g stroke="#686868" strokeWidth={1.5}>
        {states.map(([code, fill, outline]) => (
          <path key={code} d={trace(outline, true)} fill={fill} />
        ))}
      </g>
      <g fill="#fefefe">
        <Areas items={greatLakes} />
      </g>
      <g fill="none" stroke="#8a8a8a" strokeWidth={1.5}>
        <Lines items={lakeBorders} />
      </g>
      <g fill="#fefefe" stroke="#686868" strokeWidth={1.5}>
        <path d={trace(lakeMichigan, true)} />
        <Areas items={inlets} />
      </g>
      <g fill="none" stroke="#686868" strokeWidth={1.6}>
        <Lines items={shoreLines} />
        <Lines items={creeks} />
        <path d={trace("W 318,108 C 707,108")} stroke="#777" strokeWidth={2} />
      </g>

      <Labels items={stateLabels} size={19.5} fill="rgba(20, 10, 60, 0.075)" />
      <Labels items={[["United", 1906.5, 1988.5, 981], ["States", 1907.5, 1988, 1014.3]]} size={27} fill="rgba(20, 20, 30, 0.1)" />
      <Labels items={[["California", 1456.5, 1547, 1074.6]]} size={19.5} fill="rgba(20, 0, 70, 0.34)" />
      <Labels items={[["Florida", 2284.5, 2348.5, 1300]]} size={19.5} fill="rgba(60, 40, 110, 0.22)" />

      <rect x={1337} y={1845} width={365} height={28} fill="#f9f9f9" />
      <Attribution x={1341} y={1868.5} textLength={162}>
        © 2023 Mapbox
      </Attribution>
      <Attribution x={1513} y={1868.5} textLength={185}>
        © OpenStreetMap
      </Attribution>
    </MapCanvas>
  );
}

/* ---------- page ---------- */

function Dropdown() {
  return (
    <Select>
      <span>(All)</span>
      <svg width="12" height="8" viewBox="0 0 12 8">
        <path d="M0 0H12L7.5 7Q6 9 4.5 7Z" fill="#333" />
      </svg>
    </Select>
  );
}

function ResetAction({ target }: { target: string }) {
  return (
    <Reset>
      <ResetText>
        RESET
        <br />
        {target}
      </ResetText>
      <CheckIcon viewBox="2305 143 76 70">
        <path d="M2311.2 177.5L2320.2 169.5L2337 187.3L2364.3 149.2Q2370 151.5 2374.3 158L2340.5 205.4Q2338.4 208.4 2336.3 205.6Z" fill="#000" />
      </CheckIcon>
    </Reset>
  );
}

export default function App() {
  return (
    <Page>
      <GlobalStyle />
      <Sidebar>
        <Brand>
          <BrandLine $shift={14}>US Accident</BrandLine>
          <BrandLine>Analysis</BrandLine>
          <BrandYears>(2017-2022)</BrandYears>
        </Brand>
        <Nav>
          <NavButton>Temporal Analysis</NavButton>
          <NavButton $active>Geographic Analysis</NavButton>
        </Nav>
        <Filters>
          <Filter $gap={108}>
            <FilterLabel>YEAR</FilterLabel>
            <Dropdown />
          </Filter>
          <Filter $gap={90}>
            <FilterLabel>STATE</FilterLabel>
            <FilterNote>(This will apply except for the map)</FilterNote>
            <Dropdown />
          </Filter>
          <Filter>
            <FilterLabel>SEVERITY</FilterLabel>
            <Dropdown />
          </Filter>
        </Filters>
        <Source>
          Data Source
          <br />
          <b>Kaggle</b>
        </Source>
      </Sidebar>
      <Main>
        <Heading>Geographic Analysis</Heading>
        <Board>
          <Stack>
            <Card $height={867}>
              <CardTitle $spacing={-0.5}>Accidents by City</CardTitle>
              <CityChart>
                {cities.map(([name, count]) => (
                  <CityRow key={name}>
                    <CityLabel>{name}</CityLabel>
                    <CityTrack>
                      <Bar style={{ width: Math.floor(count * 0.001815) }} />
                      <BarValue>{format(count)}</BarValue>
                    </CityTrack>
                  </CityRow>
                ))}
              </CityChart>
            </Card>
            <Card $height={866}>
              <CardTitle $spacing={-0.4}>Accidents by Streets</CardTitle>
              <StreetTable>
                {streets.map(([name, count, fill]) => (
                  <StreetRow key={name}>
                    <StreetName>
                      <SlabI>{name[0]}</SlabI>
                      {name.slice(1)}
                    </StreetName>
                    <StreetValue $fill={fill} $dark={count > 40000}>
                      {format(count)}
                    </StreetValue>
                  </StreetRow>
                ))}
              </StreetTable>
            </Card>
          </Stack>
          <Card $height={1770}>
            <MapHeader>
              <MapTitles>
                <MapTitle>Accidents Map</MapTitle>
                <MapHint>(Click State and/or County to drill down)</MapHint>
              </MapTitles>
              <Resets>
                <ResetAction target="STATE" />
                <ResetAction target="COUNTY" />
              </Resets>
            </MapHeader>
            <MapFrame>
              <AccidentsMap />
            </MapFrame>
          </Card>
        </Board>
        <Credit>
          Designed by <b>Sun Kim</b> | <ProfileLink>https://www.linkedin.com/in/sunkim133</ProfileLink>
        </Credit>
      </Main>
    </Page>
  );
}
